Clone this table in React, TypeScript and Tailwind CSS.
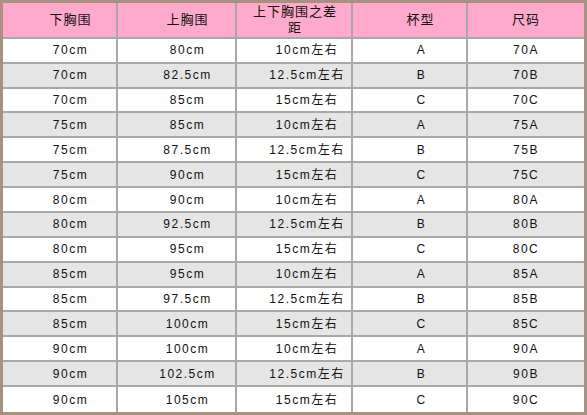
const rows = [
  ["70cm", "80cm", "10cm左右", "A", "70A"],
  ["70cm", "82.5cm", "12.5cm左右", "B", "70B"],
  ["70cm", "85cm", "15cm左右", "C", "70C"],
  ["75cm", "85cm", "10cm左右", "A", "75A"],
  ["75cm", "87.5cm", "12.5cm左右", "B", "75B"],
  ["75cm", "90cm", "15cm左右", "C", "75C"],
  ["80cm", "90cm", "10cm左右", "A", "80A"],
  ["80cm", "92.5cm", "12.5cm左右", "B", "80B"],
  ["80cm", "95cm", "15cm左右", "C", "80C"],
  ["85cm", "95cm", "10cm左右", "A", "85A"],
  ["85cm", "97.5cm", "12.5cm左右", "B", "85B"],
  ["85cm", "100cm", "15cm左右", "C", "85C"],
  ["90cm", "100cm", "10cm左右", "A", "90A"],
  ["90cm", "102.5cm", "12.5cm左右", "B", "90B"],
  ["90cm", "105cm", "15cm左右", "C", "90C"],
];

const widths = ["w-[115px]", "w-[119px]", "w-[116px]", "w-[115px]", "flex-1"];
// the source table's cells are not quite centred
const headPad = ["pl-[22px]", "pl-[22px]", "pl-[2px]", "pl-[22px]", ""];
const cellPad = ["pl-[22px]", "pl-[22px]", "pl-[26px]", "pl-[24px]", ""];

export default function App() {
  return (
    <div
      className="w-[587px] h-[415px] bg-[#a8917f] p-[3px] text-[#111] text-[12px]"
      style={{ fontFamily: '"Liberation Sans", "Noto Sans CJK SC", sans-serif' }}
    >
      <div className="flex flex-col h-full bg-white">
        {/* header */}
        <div className="flex h-[36px] bg-[#ffaacd] border-b-2 border-[#a8a8a8]">
          {["下胸围", "上胸围", "上下胸围之差距", "杯型", "尺码"].map((h, i) => (
            <div
              key={h}
              className={`${widths[i]} ${headPad[i]} flex items-center justify-center text-center text-[13px] leading-[16px] tracking-[1px] ${
                i < 4 ? "border-r-2 border-[#a8a8a8]" : ""
              }`}
            >
              {i === 2 ? (
                <span>
                  上下胸围之差
                  <br />距
                </span>
              ) : (
                h
              )}
            </div>
          ))}
        </div>
        {rows.map((r, ri) => (
          <div
            key={ri}
            className={`flex h-[25px] ${ri < rows.length - 1 ? "border-b-2 border-[#a8a8a8]" : ""} ${
              ri % 2 === 1 ? "bg-[#e5e5e5]" : "bg-white"
            }`}
          >
            {r.map((c, ci) => (
              <div
                key={ci}
                className={`${widths[ci]} ${cellPad[ci]} flex items-center justify-center tracking-[1.5px] ${
                  ci < 4 ? "border-r-2 border-[#a8a8a8]" : ""
                }`}
              >
                {c}
              </div>
            ))}
          </div>
        ))}
      </div>
    </div>
  );
}
